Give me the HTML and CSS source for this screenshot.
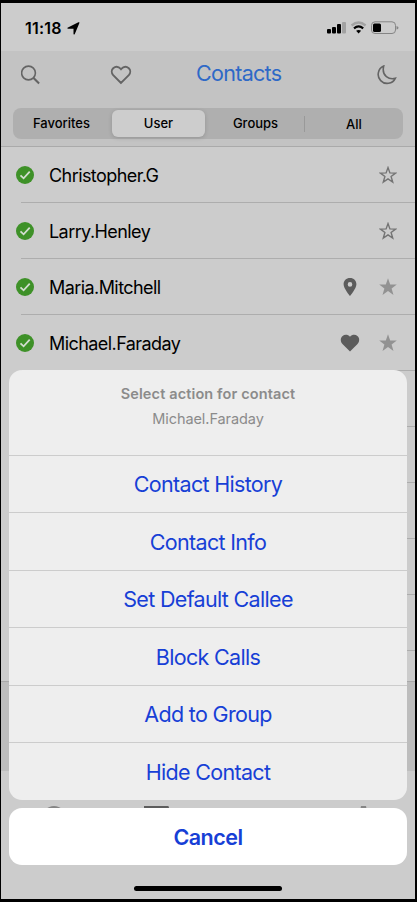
FILE: index.html
```
<!DOCTYPE html>
<html lang="en">
<head>
<meta charset="utf-8">
<title>Contacts</title>
<link rel="stylesheet" href="styles.css">
</head>
<body>
<svg class="defs" width="0" height="0" aria-hidden="true">
  <symbol id="check" viewBox="0 0 18 18"><circle cx="9" cy="9" r="9" fill="#3e9128"/><path d="M4.500 9.300 7.600 12.300 13.700 5.700" fill="none" stroke="#d3ddd0" stroke-width="1.800"/></symbol>
  <symbol id="star" viewBox="0 0 18 18"><path d="M9 0.300 11.200 6.500 17.800 6.600 12.600 10.600 14.500 16.900 9 13.100 3.500 16.900 5.400 10.600 0.200 6.600 6.800 6.500Z" fill="#929292"/></symbol>
  <symbol id="star-o" viewBox="0 0 18 18"><path d="M9 1.600 10.900 6.900 16.600 7.100 12.100 10.500 13.700 16 9 12.800 4.300 16 5.900 10.500 1.400 7.100 7.100 6.900Z" fill="none" stroke="#747474" stroke-width="1.400"/></symbol>
</svg>
<div class="screen">
  <div class="status">
    <span class="time">11:18</span>
    <svg class="arrow" width="13" height="13" viewBox="0 0 13 13"><path d="M12.400.9 7.800 12Q7 13 6.500 12V6.700H1Q-.3 6.200 1 5.500L11.400.3Q12.700-.1 12.400.9Z"/></svg>
    <svg class="signals" width="72" height="14" viewBox="0 0 72 14">
      <rect x="0" y="8" width="4" height="4.500" rx="1"/><rect x="5" y="6" width="4" height="6.500" rx="1"/><rect x="10" y="3" width="4" height="9.500" rx="1"/><rect x="15" y="1" width="4" height="11.500" rx="1" fill="#a2a2a2"/>
      <path d="M24.600 4.500Q31.600-1.400 38.600 4.500" fill="none" stroke="#a2a2a2" stroke-width="2.300"/>
      <path d="M27 7.300Q31.600 3.500 36.200 7.300" fill="none" stroke="#000" stroke-width="2.200"/>
      <path d="M29.100 9.800Q31.600 8 34.100 9.800L31.600 12.500Z"/>
      <rect x="44.500" y=".8" width="24" height="11.700" rx="3.500" fill="none" stroke="#858585"/>
      <rect x="46" y="2.500" width="8" height="8.500" rx="1.500"/><path d="M69.500 5Q71.500 5.400 71.500 6.800T69.500 8.600Z" fill="#858585"/>
    </svg>
  </div>
  <header class="header">
    <div class="toolbar">
      <svg class="search" width="20" height="20" viewBox="0 0 20 20"><circle cx="7.500" cy="8" r="6.900"/><path d="m12.300 12.800 5.800 5.700" stroke-width="2.100"/></svg>
      <svg class="heart" width="22" height="20" viewBox="0 0 22 20"><path d="M11 18 3.200 10.200C1.300 8 1.300 5 3.200 3.200 5.500 1.200 8.500 1.400 11 4.200 13.500 1.400 16.500 1.200 18.800 3.200 20.700 5 20.700 8 18.800 10.200Z"/></svg>
      <h1 class="title">Contacts</h1>
      <svg class="moon" width="21" height="20" viewBox="0 0 21 20"><path d="M7.700 1.100A9 9 0 1 0 19.300 13.300C13.500 14.800 5.200 11.400 7.700 1.100Z"/></svg>
    </div>
    <nav class="segments">
      <span class="seg">Favorites</span><span class="seg active">User</span><span class="seg">Groups</span><span class="seg divided">All</span>
    </nav>
  </header>
  <ul class="list">
    <li class="row"><svg class="check"><use href="#check"/></svg><span class="name">Christopher.G</span><svg class="star"><use href="#star-o"/></svg></li>
    <li class="row"><svg class="check"><use href="#check"/></svg><span class="name">Larry.Henley</span><svg class="star"><use href="#star-o"/></svg></li>
    <li class="row"><svg class="check"><use href="#check"/></svg><span class="name">Maria.Mitchell</span><svg class="mark" viewBox="0 0 20 20"><path fill-rule="evenodd" d="M10 1C6.200 1 3.600 3.600 3.600 7.200 3.600 11.500 10 19 10 19S16.400 11.500 16.400 7.200C16.400 3.600 13.800 1 10 1ZM10 5.100A2.300 2.300 0 1 1 10 9.700 2.300 2.300 0 1 1 10 5.100Z"/></svg><svg class="star"><use href="#star"/></svg></li>
    <li class="row"><svg class="check"><use href="#check"/></svg><span class="name">Michael.Faraday</span><svg class="mark" viewBox="0 0 20 20"><path d="M10 18.500 2.700 11.300C.2 8.500.3 5 2.300 3.200 4.800 1.200 7.800 1.500 10 3.700 12.200 1.500 15.200 1.200 17.700 3.200 19.700 5 19.800 8.500 17.300 11.300Z"/></svg><svg class="star"><use href="#star"/></svg></li>
    <li class="row"></li><li class="row"></li><li class="row"></li><li class="row"></li><li class="row"></li><li class="row"></li>
  </ul>
  <div class="band"></div>
  <div class="tabs">
    <svg width="414" height="40" viewBox="0 0 414 40"><circle cx="53" cy="47" r="12" fill="#858585"/><path d="M143 35h24q1 0 1 2v3h-25Z" fill="#5d5d5d"/><path d="M360 35h5l1 5h-7Z" fill="#858585"/></svg>
  </div>
  <div class="overlay">
    <section class="sheet">
      <div class="prompt"><strong>Select action for contact</strong><span>Michael.Faraday</span></div>
      <button>Contact History</button>
      <button>Contact Info</button>
      <button>Set Default Callee</button>
      <button>Block Calls</button>
      <button>Add to Group</button>
      <button>Hide Contact</button>
    </section>
    <button class="cancel">Cancel</button>
    <div class="home"></div>
  </div>
</div>
</body>
</html>
```
FILE: styles.css
```
* { box-sizing: border-box; }
body { margin: 0; background: #000; font-family: Inter, "Liberation Sans", sans-serif; }
.defs { display: block; }
svg { display: block; flex: none; }
.screen { position: relative; height: 902px; border: solid #000; border-width: 3px 2px 3px 1px; background: #ccc; overflow: hidden; }
.status { height: 48px; display: flex; align-items: flex-start; padding: 17px 16px 0 24px; }
.time { font-size: 16px; font-weight: 600; line-height: 17px; width: 38px; letter-spacing: .2px; white-space: nowrap; }
.arrow { margin: 2px 0 0 4px; }
.signals { margin: 1px 0 0 auto; }
.header { height: 96px; background: #c3c3c3; border-bottom: 1px solid #aaa; }
.toolbar { height: 57px; display: flex; align-items: flex-start; padding: 14px 18px 0 20px; }
.toolbar svg { fill: none; stroke: #646464; stroke-width: 1.600; }
.toolbar .heart { margin-left: 69px; stroke-width: 1.900; }
.title { margin: -5px 0 0 64px; width: 87px; font-size: 21.500px; line-height: 26px; font-weight: 400; color: #2e69c7; letter-spacing: -.7px; }
.toolbar .moon { margin-left: auto; }
.segments { margin: 0 12px; height: 31px; display: grid; grid-template-columns: 97px 97px 97px 99px; align-items: center; background: #afafaf; border-radius: 8px; }
.seg { font-size: 13px; font-weight: 500; line-height: 27px; text-align: center; }
.active { background: #cdcdcd; border-radius: 6px; margin: 0 2px; box-shadow: 0 1px 4px #00000028; }
.divided { line-height: 16px; height: 16px; border-left: 1px solid #999; }
.list { list-style: none; margin: 0; padding: 0; height: 534px; overflow: hidden; }
.row { height: 56px; margin-left: 20px; border-bottom: 1px solid #adadad; display: flex; align-items: center; padding-right: 18px; }
.check { width: 18px; height: 18px; margin-left: -5px; }
.name { font-size: 18px; line-height: 24px; margin: 3px auto 0 15px; letter-spacing: -.57px; }
.mark { width: 20px; height: 20px; margin-right: 19px; fill: #5c5c5c; }
.star { width: 18px; height: 18px; }
.band { height: 90px; background: #bdbdbd; border-top: 1px solid #a9a9a9; }
.overlay { position: absolute; left: 8px; top: 367px; width: 398px; }
.sheet { height: 430px; border-radius: 13px; background: #eee; overflow: hidden; display: grid; grid-template-rows: 85px repeat(3, 57px 58px); }
.prompt { display: flex; flex-direction: column; align-items: center; color: #8b8b8b; font-size: 14.500px; line-height: 20px; padding-top: 14px; gap: 5px; letter-spacing: -.08px; }
.prompt strong { font-weight: 600; letter-spacing: .13px; }
button { font: 400 21.500px/28px Inter, "Liberation Sans", sans-serif; letter-spacing: -.68px; color: #173fd6; border: 0; padding: 0; background: none; text-align: center; }
.sheet button { border-top: 1px solid #ccc; }
.cancel { display: block; width: 100%; height: 57px; margin-top: 8px; border-radius: 13px; background: #fff; font-weight: 600; letter-spacing: -.5px; }
.home { width: 148px; height: 5px; margin: 21px 0 0 125px; border-radius: 3px; background: #000; }
```
